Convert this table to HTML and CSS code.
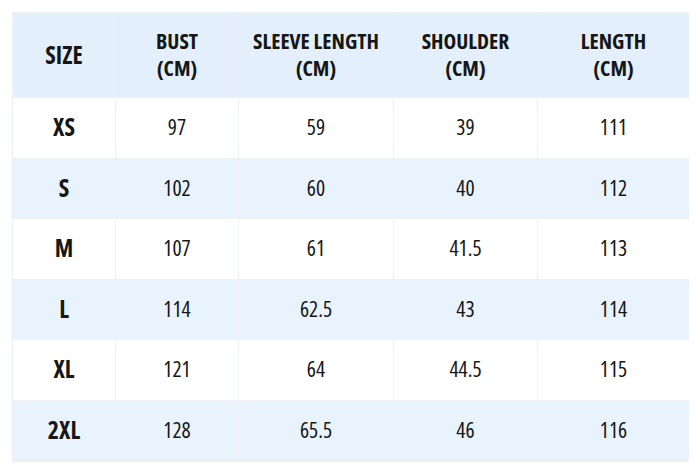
FILE: index.html
```html
<!DOCTYPE html>
<html>
<head>
<meta charset="utf-8">
<link rel="stylesheet" href="styles.css">
</head>
<body>
<div class="chart">
  <div class="cell head size">SIZE</div>
  <div class="cell head">BUST<br>(CM)</div>
  <div class="cell head">SLEEVE LENGTH<br>(CM)</div>
  <div class="cell head">SHOULDER<br>(CM)</div>
  <div class="cell head">LENGTH<br>(CM)</div>

  <div class="cell lbl">XS</div><div class="cell">97</div><div class="cell">59</div><div class="cell">39</div><div class="cell">111</div>
  <div class="cell lbl alt">S</div><div class="cell alt">102</div><div class="cell alt">60</div><div class="cell alt">40</div><div class="cell alt">112</div>
  <div class="cell lbl">M</div><div class="cell">107</div><div class="cell">61</div><div class="cell">41.5</div><div class="cell">113</div>
  <div class="cell lbl alt">L</div><div class="cell alt">114</div><div class="cell alt">62.5</div><div class="cell alt">43</div><div class="cell alt">114</div>
  <div class="cell lbl">XL</div><div class="cell">121</div><div class="cell">64</div><div class="cell">44.5</div><div class="cell">115</div>
  <div class="cell lbl alt">2XL</div><div class="cell alt">128</div><div class="cell alt">65.5</div><div class="cell alt">46</div><div class="cell alt">116</div>
</div>
</body>
</html>
```

FILE: styles.css
```css
html, body {
  margin: 0;
  background: #ffffff;
}
body {
  padding: 12px;
  font-family: "Open Sans", "DejaVu Sans Condensed", sans-serif;
  font-stretch: 75%;
  color: #161616;
}
.chart {
  display: grid;
  grid-template-columns: 103px 123px 155px 144px 151px;
  grid-template-rows: 85px repeat(6, 1fr);
  width: 676px;
  height: 450px;
  box-sizing: border-box;
  border: 1px solid #eaf0f5;
}
.cell {
  display: flex;
  align-items: center;
  justify-content: center;
  text-align: center;
  font-size: 21.5px;
  padding-bottom: 2px;
  background: #ffffff;
  border-right: 1px solid #edf1f5;
  border-bottom: 1px solid #edf1f5;
}
.cell:nth-child(5n) {
  border-right: none;
}
.alt {
  background: #e8f3fd;
}
.head {
  background: #e3f0fb;
  font-weight: bold;
  font-size: 21.5px;
  line-height: 27px;
  padding-bottom: 3px;
}
.head.size {
  font-size: 24px;
  padding-bottom: 2px;
}
.lbl {
  font-weight: bold;
  font-size: 24px;
}
```
